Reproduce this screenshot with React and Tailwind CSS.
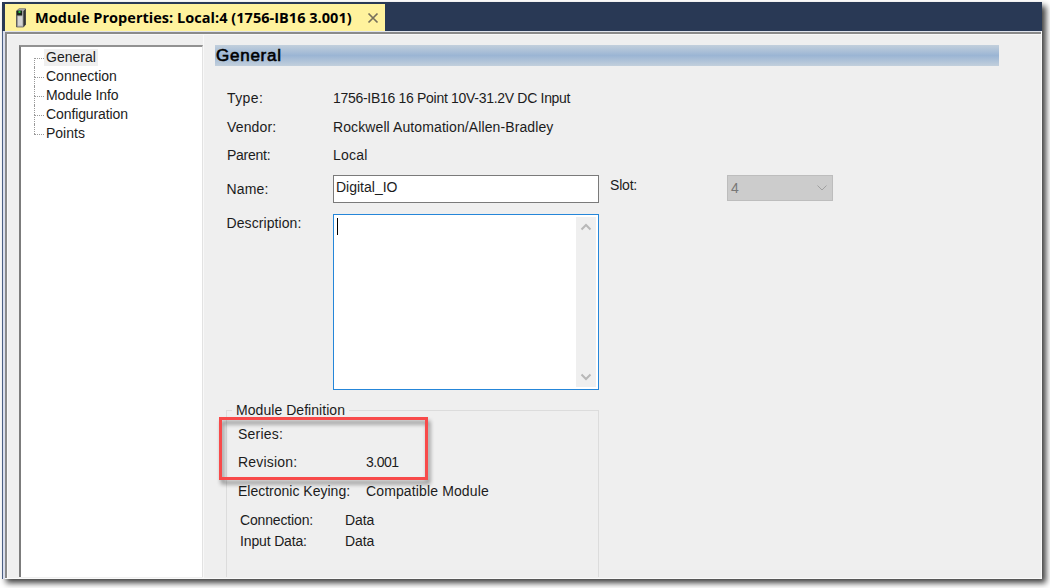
const treeItems = [
  { label: "General", cls: "tracking-[0px]", selected: true },
  { label: "Connection", cls: "tracking-[0px]" },
  { label: "Module Info", cls: "tracking-[-0.05px]" },
  { label: "Configuration", cls: "tracking-[-0.1px]" },
  { label: "Points", cls: "tracking-[0px]" },
];

function ModuleIcon() {
  return (
    <svg width="10" height="20" viewBox="0 0 10 20" className="shrink-0">
      <path d="M0.5 3 L3 0.8 H9.5 V16.5 L7.5 19 H0.5 Z" fill="#b9b9b9" stroke="#666" strokeWidth="0.8" />
      <path d="M7.3 3 L9.7 0.8 V16.5 L7.3 19 Z" fill="#333" />
      <rect x="0.6" y="2.5" width="5.6" height="5" fill="#1c241c" />
      <rect x="2.5" y="3" width="2" height="2" fill="#27c43c" />
      <path d="M2 8.5 H6 V17.5 H2 Z" fill="#d4d4d4" />
      <path d="M0.8 7 V19" stroke="#555" />
    </svg>
  );
}

function Chevron({ up, className }) {
  return (
    <svg width="12" height="8" viewBox="0 0 12 8" className={className} fill="none" stroke="currentColor">
      <path d={up ? "M1.5 6.5 L6 2 L10.5 6.5" : "M1.5 1.5 L6 6 L10.5 1.5"} />
    </svg>
  );
}

function Tree() {
  return (
    <nav className="mt-[10px] h-[532px] w-[184px] shrink-0 border-t-2 border-r border-l-2 border-t-[#929292] border-r-[#e2e2e2] border-l-[#7c7c7c] bg-white pt-px">
      {treeItems.map((item, i) => (
        <div key={item.label} className="flex h-[19px] pl-[13px]">
          <div className="flex w-[10px] shrink-0 flex-col">
            <div className={i === 0 ? "h-[10px]" : "h-[10px] border-l border-dotted border-[#999]"} />
            <div
              className={
                i === treeItems.length - 1
                  ? "h-[9px] border-t border-dotted border-[#999]"
                  : "h-[9px] border-t border-l border-dotted border-[#999]"
              }
            />
          </div>
          <span className={item.selected ? "my-px h-[17px] bg-[#efefef] px-0.5 leading-[17px]" : "my-px h-[17px] px-0.5 leading-[17px]"}>
            <span className={item.cls}>{item.label}</span>
          </span>
        </div>
      ))}
    </nav>
  );
}

function InfoRow({ label, value, labelCls, valueCls }) {
  return (
    <div className="flex h-[28.5px] items-center">
      <div className="w-[106px]"><span className={labelCls}>{label}</span></div>
      <span className={valueCls}>{value}</span>
    </div>
  );
}

function Definition() {
  return (
    <div className="ml-[11px] flex h-[188px]">
      <div className="relative mt-[20px] w-[373px] border-t border-r border-l border-[#dcdcdc]">
        <div className="-mt-[9px] ml-[5px] flex h-[17px] w-fit items-center bg-[#efefef] px-1">
          <span className="tracking-[0.05px]">Module Definition</span>
        </div>
        <div className="ml-[11px] flex h-[30px] items-center"><span className="tracking-[0.2px]">Series:</span></div>
        <div className="ml-[11px] flex h-[26px] items-center">
          <div className="w-[128px]"><span className="tracking-[0.2px]">Revision:</span></div>
          <span className="tracking-[-0.5px]">3.001</span>
        </div>
        <div className="ml-[11px] flex h-[33px] items-center">
          <div className="w-[128px]"><span className="tracking-[0px]">Electronic Keying:</span></div>
          <span className="tracking-[0.13px]">Compatible Module</span>
        </div>
        <div className="ml-[13px] flex h-[25px] items-center">
          <div className="w-[105px]"><span className="tracking-[-0.15px]">Connection:</span></div>
          <span className="tracking-[-0.1px]">Data</span>
        </div>
        <div className="ml-[13px] flex h-[17px] items-center">
          <div className="w-[105px]"><span className="tracking-[-0.15px]">Input Data:</span></div>
          <span className="tracking-[-0.1px]">Data</span>
        </div>
        <div className="absolute top-[6px] -left-[8px] h-[63px] w-[209px] border-[3px] border-[#f84a4a] [filter:drop-shadow(2px_4px_2px_rgba(0,0,0,0.45))]" />
      </div>
    </div>
  );
}

export default function App() {
  return (
    <div className="h-[588px] w-[1050px] overflow-hidden bg-white pt-[2px] pl-[2px] font-['Liberation_Sans',Arial,sans-serif] text-[14px] leading-4 whitespace-nowrap text-[#1c1c1c]">
      <div className="flex h-[577px] w-[1040px] flex-col bg-[#efefef] shadow-[4px_4px_6px_rgba(0,0,0,0.75)]">
        <header className="flex h-[29px] shrink-0 items-stretch bg-[#293955] pt-[2px] pl-[3px]">
          <div className="flex w-[380px] items-center bg-[#fff29d] pl-[11px]">
            <ModuleIcon />
            <span className="ml-[9px] w-[327px] font-['Open_Sans','Noto_Sans',sans-serif] text-[14.5px] leading-5 font-bold tracking-[0.03px] text-black">
              Module Properties: Local:4 (1756-IB16 3.001)
            </span>
            <svg width="12" height="12" viewBox="0 0 12 12" className="mt-px ml-[5px]" stroke="#77715c" strokeWidth="1.7">
              <path d="M1.5 1.5 L10.5 10.5 M10.5 1.5 L1.5 10.5" />
            </svg>
          </div>
        </header>
        <div className="flex min-h-0 flex-1 border-l border-[#4b5f83]">
          <div className="w-[2px] shrink-0 bg-[#dadfee]" />
          <div className="flex min-w-0 flex-1 flex-col border-r border-b border-[#fafafa]">
            <div className="h-px shrink-0 bg-[#dfe3ec]" />
            <div className="flex min-h-0 flex-1 border-t-2 border-l-2 border-[#8a8a8a]">
              <div className="flex min-h-0 flex-1 border-t border-l border-[#f8f8f8] pl-[11px]">
                <Tree />
                <div className="w-px shrink-0 bg-[#f8f8f8]" />
                <main className="mt-[10px] ml-[11px] h-[532px] w-[784px] overflow-hidden">
                  <h1 className="flex h-[21px] items-center bg-linear-to-b from-[#c2cfdc] via-[#9bb5d4] to-[#c2cfdc] pt-px pl-[1px] text-[17px] leading-5 font-normal tracking-[0.75px] text-black [-webkit-text-stroke:0.6px_black]">
                    General
                  </h1>
                  <div className="mt-[18px] ml-[12px]">
                    <InfoRow label="Type:" value="1756-IB16 16 Point 10V-31.2V DC Input" labelCls="tracking-[0.4px]" valueCls="tracking-[-0.3px]" />
                    <InfoRow label="Vendor:" value="Rockwell Automation/Allen-Bradley" labelCls="tracking-[0.15px]" valueCls="tracking-[0.1px]" />
                    <InfoRow label="Parent:" value="Local" labelCls="tracking-[-0.25px]" valueCls="tracking-[0.2px]" />
                  </div>
                  <div className="mt-[5px] ml-[11px] flex h-[28px]">
                    <div className="w-[107px] pt-[6px] pl-[0.5px]"><span className="tracking-[0.15px]">Name:</span></div>
                    <div className="h-[28px] w-[266px] border border-[#7a7a7a] bg-white pt-[3px] pl-[2px]">
                      <span className="tracking-[0px]">Digital_IO</span>
                    </div>
                    <div className="w-[128px] pt-[2px] pl-[11px]"><span className="tracking-[-0.2px]">Slot:</span></div>
                    <div className="flex h-[26px] w-[106px] items-center justify-between border border-[#bdbdbd] bg-[#cccccc] pr-[4px] pl-[3px] text-[#777]">
                      <span>4</span>
                      <Chevron className="text-[#a0a0a0]" />
                    </div>
                  </div>
                  <div className="mt-[11px] ml-[11px] flex h-[176px]">
                    <div className="w-[107px] pt-[1px] pl-[0.5px]"><span className="tracking-[0.08px]">Description:</span></div>
                    <div className="flex h-[176px] w-[266px] justify-between border border-[#2586d9] bg-white py-[2px] pr-[2px] pl-[3px]">
                      <div className="mt-px h-[17px] w-px bg-black" />
                      <div className="flex w-[20px] flex-col items-center justify-between bg-[#efefef] py-[6px]">
                        <Chevron up className="stroke-2 text-[#b8b8b8]" />
                        <Chevron className="stroke-2 text-[#b8b8b8]" />
                      </div>
                    </div>
                  </div>
                  <Definition />
                </main>
              </div>
            </div>
          </div>
        </div>
      </div>
    </div>
  );
}
